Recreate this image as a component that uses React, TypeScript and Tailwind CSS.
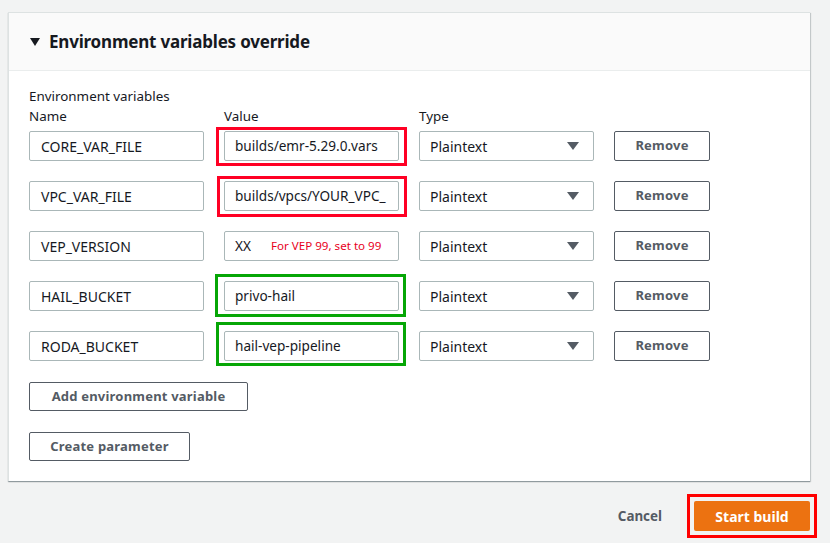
import React from 'react';

type Row = {
  name: string;
  value: string;
  hint?: string;
  mark?: 'red' | 'green';
  markClass?: string;
};

const rows: Row[] = [
  { name: 'CORE_VAR_FILE', value: 'builds/emr-5.29.0.vars', mark: 'red', markClass: '-left-2 -right-2 -top-1 -bottom-[5px]' },
  { name: 'VPC_VAR_FILE', value: 'builds/vpcs/YOUR_VPC_', mark: 'red', markClass: '-left-[7px] -right-2 -top-[5px] -bottom-[6px]' },
  { name: 'VEP_VERSION', value: 'XX', hint: 'For VEP 99, set to 99' },
  { name: 'HAIL_BUCKET', value: 'privo-hail', mark: 'green', markClass: '-left-[9px] -right-[7px] -top-[7px] -bottom-[6px]' },
  { name: 'RODA_BUCKET', value: 'hail-vep-pipeline', mark: 'green', markClass: '-left-2 -right-[7px] -top-[9px] -bottom-[5px]' },
];

const Caret = () => (
  <svg width="12" height="8" viewBox="0 0 12 8" className="fill-[#545b64]">
    <path d="M0 0h12L6 8z" />
  </svg>
);

const OutlineButton: React.FC<{ label: string; className?: string }> = ({ label, className }) => (
  <button className={`h-[29px] border border-[#545b64] rounded-[2px] bg-white text-[13px] font-bold text-[#545b64] tracking-[0.2px] ${className ?? ''}`}>
    {label}
  </button>
);

export default function App() {
  return (
    <div className="h-[543px] w-[830px] bg-[#f2f3f3] overflow-hidden text-[#16191f]" style={{ fontFamily: '"Noto Sans", "Open Sans", sans-serif' }}>
      <div className="pt-3 pl-2 w-[810px]">
        <div className="bg-white border-t border-l border-[#dde2e2] shadow-[0_1px_1px_0_rgba(0,28,36,0.3),1px_1px_1px_0_rgba(0,28,36,0.15)]">
          <div className="h-[58px] bg-[#fafafa] border-b border-[#eaeded] flex items-center pl-[21px] gap-[9px]">
            <svg width="10" height="8" viewBox="0 0 10 8" className="fill-[#16191f]">
              <path d="M0 0h10L5 8z" />
            </svg>
            <h2 className="text-[17px] font-bold tracking-[-0.2px]">Environment variables override</h2>
          </div>

          <div className="pl-5 pt-[15px] pb-5">
            <div className="text-[13.4px] leading-5">Environment variables</div>
            <div className="flex text-[13.4px] leading-5 mb-[5px]">
              <div className="w-[195px]">Name</div>
              <div className="w-[195px]">Value</div>
              <div>Type</div>
            </div>

            <div className="flex flex-col gap-5">
              {rows.map((r) => (
                <div key={r.name} className="flex gap-5 h-[30px]">
                  <div className="w-[175px] border border-[#aab7b8] rounded-[2px] flex items-center pl-[11px] text-[14px]">{r.name}</div>
                  <div className="relative w-[175px]">
                    <div className="h-full border border-[#aab7b8] rounded-[2px] flex items-center pl-[10px] text-[13.6px] overflow-hidden whitespace-nowrap">
                      {r.value}
                      {r.hint && <span className="ml-[20px] text-[11.6px] text-[#e8001c]">{r.hint}</span>}
                    </div>
                    {r.mark && (
                      <div className={`absolute border-[3px] ${r.mark === 'red' ? 'border-[#ff0024]' : 'border-[#06a606]'} ${r.markClass}`} />
                    )}
                  </div>
                  <div className="w-[175px] border border-[#aab7b8] rounded-[2px] flex items-center justify-between pl-[10px] pr-[14px] text-[14px]">
                    Plaintext
                    <Caret />
                  </div>
                  <OutlineButton label="Remove" className="w-[96px] h-[30px]" />
                </div>
              ))}
            </div>

            <div className="mt-[21px] flex flex-col items-start gap-[21px]">
              <OutlineButton label="Add environment variable" className="w-[219px]" />
              <OutlineButton label="Create parameter" className="w-[161px]" />
            </div>
          </div>
        </div>

        <div className="mt-5 flex justify-end items-center">
          <button className="text-[13.4px] font-bold text-[#545b64] px-4 mr-[9px]">Cancel</button>
          <div className="border-[3px] border-[#ff0000] p-1 -mr-[7px] -my-[7px]">
            <button className="w-[116px] h-[30px] bg-[#ec7211] rounded-[2px] text-white text-[14px] font-bold">Start build</button>
          </div>
        </div>
      </div>
    </div>
  );
}
